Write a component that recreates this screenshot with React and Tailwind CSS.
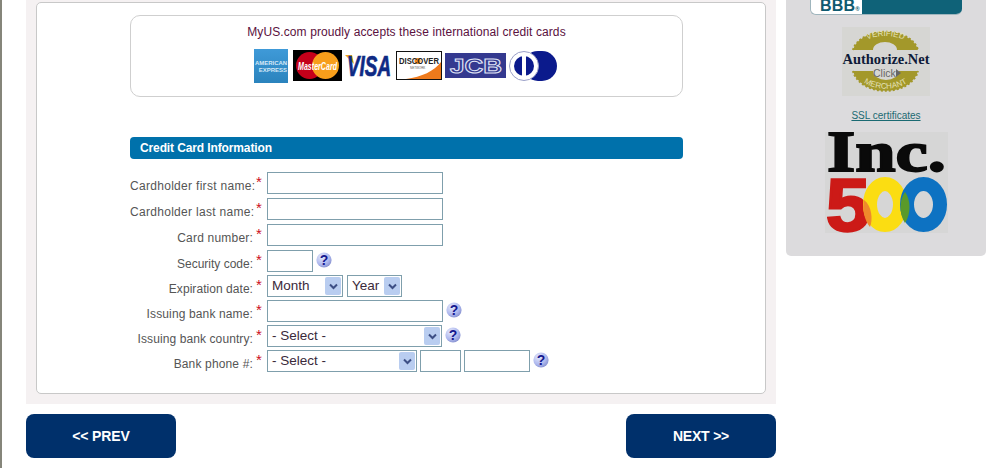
import React from 'react';

// Small blue question mark bubble
const HelpIcon = ({ className = '' }) => (
  <svg width="16" height="16" viewBox="0 0 16 16" className={className}>
    <defs>
      <radialGradient id="helpBg" cx="35%" cy="30%" r="75%">
        <stop offset="0%" stopColor="#e4e8fb" />
        <stop offset="65%" stopColor="#aeb8ee" />
        <stop offset="100%" stopColor="#8791cf" />
      </radialGradient>
    </defs>
    <circle cx="8" cy="8" r="7.6" fill="url(#helpBg)" />
    <text x="8" y="13" textAnchor="middle" fontFamily="Liberation Sans" fontWeight="700" fontSize="14" fill="#15188f">?</text>
  </svg>
);

const TextBox = ({ className }) => (
  <input type="text" className={`h-[22px] border border-[#7f9fac] bg-white outline-none ${className}`} />
);

const Select = ({ label, className }) => (
  <div className={`h-[22px] border border-[#7f9fac] bg-white flex items-center justify-between pr-px ${className}`}>
    <span className="pl-[4px] text-[13.5px] leading-none text-[#3a2a3a]">{label}</span>
    <span className="w-[16px] h-[18px] bg-[#b9cdf0] rounded-[2px] flex items-center justify-center">
      <svg width="9" height="7" viewBox="0 0 9 7">
        <path d="M1 1.5 L4.5 5 L8 1.5" fill="none" stroke="#3d4f85" strokeWidth="2" />
      </svg>
    </span>
  </div>
);

const Row = ({ label, height, spacing, children }) => (
  <div className={`flex items-start ${height}`}>
    <div className={`w-[123px] pt-[7px] text-right text-[12px] leading-[15px] text-[#555555] whitespace-nowrap ${spacing}`}>{label}</div>
    <div className="w-[14px] pl-[3px] pt-[3px] text-[15px] leading-[14px] text-[#cc1122]">*</div>
    <div className="flex items-center gap-[3px]">{children}</div>
  </div>
);

const Amex = () => (
  <svg width="34" height="34" viewBox="0 0 34 34" className="mt-[1px]">
    <defs>
      <linearGradient id="amexBg" x1="0" y1="0" x2="0" y2="1">
        <stop offset="0%" stopColor="#3f9ad8" />
        <stop offset="100%" stopColor="#2a83bd" />
      </linearGradient>
    </defs>
    <rect width="34" height="34" fill="url(#amexBg)" />
    <text x="1" y="16" fontFamily="Liberation Sans" fontWeight="700" fontSize="6" textLength="32" lengthAdjust="spacingAndGlyphs" fill="#d5e8f6">AMERICAN</text>
    <text x="33" y="23" textAnchor="end" fontFamily="Liberation Sans" fontWeight="700" fontSize="6" fill="#d5e8f6">EXPRESS</text>
  </svg>
);

const MasterCard = () => (
  <svg width="49" height="31" viewBox="0 0 49 31" className="mt-[2px] ml-[2px]">
    <rect width="49" height="31" fill="#000000" />
    <circle cx="16.5" cy="15.5" r="13.5" fill="#c4001a" />
    <circle cx="32.5" cy="15.5" r="13.5" fill="#f79e1b" />
    <text x="5" y="19.5" fontFamily="Liberation Sans" fontWeight="700" fontStyle="italic" fontSize="10.5" textLength="39" lengthAdjust="spacingAndGlyphs" fill="#ffffff">MasterCard</text>
  </svg>
);

const Visa = () => (
  <svg width="48" height="24" viewBox="0 0 48 24" className="mt-[6px] overflow-visible">
    <path d="M0 1 L7 1 L9 10 Z" fill="#f2a81d" />
    <text x="2" y="22" fontFamily="Liberation Sans" fontWeight="700" fontStyle="italic" fontSize="29" textLength="44" lengthAdjust="spacingAndGlyphs" fill="#0f2a84" stroke="#0f2a84" strokeWidth="0.7">VISA</text>
  </svg>
);

const Discover = () => (
  <svg width="46" height="29" viewBox="0 0 46 29" className="mt-[3px]">
    <rect x="0.5" y="0.5" width="45" height="28" fill="#ffffff" stroke="#111111" />
    <path d="M10 28 C26 26 38 20 45 11 L45 28 Z" fill="#ee7a1c" />
    <circle cx="21.5" cy="10" r="3" fill="#f08a1d" />
    <text x="3" y="13" fontFamily="Liberation Sans" fontWeight="700" fontSize="8.4" textLength="40" lengthAdjust="spacingAndGlyphs" fill="#222222">DISCOVER</text>
    <text x="14" y="18" fontFamily="Liberation Sans" fontSize="3" fill="#555555">NETWORK</text>
  </svg>
);

const Jcb = () => (
  <svg width="61" height="25" viewBox="0 0 61 25" className="mt-[5px]">
    <rect width="61" height="25" fill="#34398f" />
    <text x="5" y="20" fontFamily="Liberation Sans" fontWeight="700" fontSize="21" textLength="52" lengthAdjust="spacingAndGlyphs" fill="#34398f" stroke="#dfe2f5" strokeWidth="1">JCB</text>
  </svg>
);

const Diners = () => (
  <svg width="48" height="30" viewBox="0 0 48 30" className="mt-[3px]">
    <rect x="14" y="0" width="34" height="30" rx="15" fill="#0b1a8c" />
    <circle cx="15" cy="15" r="14.5" fill="#ffffff" stroke="#9ba0c8" />
    <circle cx="15" cy="15" r="10" fill="#0b1a8c" />
    <rect x="13" y="3" width="4" height="24" fill="#ffffff" />
  </svg>
);

const Bbb = () => (
  <div className="w-[152px] h-[15px] flex rounded-b-[6px] overflow-hidden ml-[24px] border-b border-l border-[#9fb5bd]">
    <div className="w-[51px] bg-white text-[#0f5a70] text-[16px] font-bold leading-[11px] pl-[9px] tracking-[0.2px] whitespace-nowrap">
      BBB<span className="text-[6px]">®</span>
    </div>
    <div className="flex-1 bg-[#0f6278]" />
  </div>
);

const Seal = () => (
  <svg width="88" height="69" viewBox="0 0 88 69" className="mt-[12px] ml-[56px]">
    <defs>
      <path id="topArc" d="M15 22 A29 16 0 0 1 72 22" />
      <path id="botArc" d="M15 47 A29 18 0 0 0 72 47" />
    </defs>
    <rect width="88" height="69" fill="#d6d6d3" />
    <path d="M11 23 A33 22 0 0 1 76 23" fill="none" stroke="#a3982a" strokeWidth="2" strokeDasharray="2 2" />
    <path d="M11 44 A33 24 0 0 0 76 44" fill="none" stroke="#a3982a" strokeWidth="2" strokeDasharray="2 2" />
    <path d="M11 23 A33 22 0 0 1 76 23 L55 23 A12 8 0 0 0 31 23 Z" fill="#a3982a" />
    <path d="M11 44 A33 24 0 0 0 76 44 L57 44 A13 9 0 0 1 31 44 Z" fill="#a3982a" />
    <text fontFamily="Liberation Sans" fontSize="8" fill="#e4e1b8">
      <textPath href="#topArc" startOffset="50%" textAnchor="middle">VERIFIED</textPath>
    </text>
    <text fontFamily="Liberation Sans" fontSize="8" fill="#e4e1b8">
      <textPath href="#botArc" startOffset="50%" textAnchor="middle">MERCHANT</textPath>
    </text>
    <text x="0.5" y="37" fontFamily="Liberation Serif" fontWeight="700" fontSize="15.5" textLength="87" lengthAdjust="spacingAndGlyphs" fill="#0e1a38">Authorize.Net</text>
    <text x="31" y="50" fontFamily="Liberation Sans" fontSize="10.5" fill="#666666">Click</text>
    <path d="M54 42 L59 46 L54 50 Z" fill="#666666" />
  </svg>
);

const Inc500 = () => (
  <svg width="123" height="101" viewBox="0 0 123 101" className="mt-[10px] ml-[39px]">
    <rect width="123" height="101" fill="#d6d6d6" />
    <text x="2" y="39" fontFamily="Liberation Serif" fontWeight="700" fontSize="58" textLength="119" lengthAdjust="spacingAndGlyphs" fill="#0a0a0a" stroke="#0a0a0a" strokeWidth="1.8">Inc.</text>
    <text x="1" y="99" fontFamily="Liberation Sans" fontWeight="700" fontSize="74" textLength="44" lengthAdjust="spacingAndGlyphs" fill="#cc1a17" stroke="#cc1a17" strokeWidth="2.5">5</text>
    <ellipse cx="60" cy="72.5" rx="15" ry="20.5" fill="none" stroke="#fbdd12" strokeWidth="14" />
    <ellipse cx="98.5" cy="72.5" rx="16.5" ry="20.5" fill="none" stroke="#0d72c2" strokeWidth="14" />
    <path d="M39 68 C37 76 39 88 45 95 C48 88 47 74 39 68 Z" fill="#ef8a2c" />
    <path d="M80 60 C74 68 74 82 80 91 C86 82 86 68 80 60 Z" fill="#5a9a2a" />
  </svg>
);

export default function App() {
  return (
    <div className="w-[990px] h-[468px] overflow-hidden bg-white flex font-['Liberation_Sans',Arial,sans-serif]">
      {/* page edge */}
      <div className="w-[2px] bg-[#85857a]" />

      {/* main column */}
      <div className="w-[750px] ml-[24px]">
        <div className="h-[404px] bg-[#f5f1f2] px-[10px] pt-[2px]">
          <div className="h-[392px] bg-white border border-[#c8c8c8] rounded-[5px] pl-[93px] pt-[12px]">
            <div className="w-[553px] h-[82px] border border-[#cfcfcf] rounded-[10px] pt-[9px]">
              <p className="text-center text-[12px] leading-[14px] tracking-[0.1px] text-[#5a1140]">
                MyUS.com proudly accepts these international credit cards
              </p>
              <div className="flex justify-center gap-[3px] mt-[9px] pr-[2px]">
                <Amex />
                <MasterCard />
                <Visa />
                <Discover />
                <Jcb />
                <Diners />
              </div>
            </div>

            <div className="w-[553px] h-[22px] mt-[40px] bg-[#0071ab] rounded-[4px] pl-[10px] text-white text-[12px] font-bold leading-[23px] tracking-[-0.12px]">
              Credit Card Information
            </div>

            <div className="mt-[13px]">
              <Row label="Cardholder first name:" height="h-[26px]" spacing="tracking-[0.3px]"><TextBox className="w-[176px]" /></Row>
              <Row label="Cardholder last name:" height="h-[26px]" spacing="tracking-[0.3px]"><TextBox className="w-[176px]" /></Row>
              <Row label="Card number:" height="h-[26px]" spacing="tracking-[0.2px]"><TextBox className="w-[176px]" /></Row>
              <Row label="Security code:" height="h-[25px]" spacing="tracking-[0px]">
                <TextBox className="w-[46px]" />
                <HelpIcon className="-mt-[3px]" />
              </Row>
              <Row label="Expiration date:" height="h-[25px]" spacing="tracking-[0.05px]">
                <Select label="Month" className="w-[76px]" />
                <Select label="Year" className="w-[55px] ml-px" />
              </Row>
              <Row label="Issuing bank name:" height="h-[25px]" spacing="tracking-[0.13px]">
                <TextBox className="w-[176px]" />
                <HelpIcon className="-mt-[3px]" />
              </Row>
              <Row label="Issuing bank country:" height="h-[25px]" spacing="tracking-[0.1px]">
                <Select label="- Select -" className="w-[175px]" />
                <HelpIcon className="-mt-[3px]" />
              </Row>
              <Row label="Bank phone #:" height="h-[25px]" spacing="tracking-[0.15px]">
                <Select label="- Select -" className="w-[150px]" />
                <TextBox className="w-[41px]" />
                <TextBox className="w-[66px]" />
                <HelpIcon className="-mt-[3px]" />
              </Row>
            </div>
          </div>
        </div>

        <div className="flex justify-between mt-[10px]">
          <button className="w-[150px] h-[44px] rounded-[8px] bg-[#00306b] text-white text-[14px] font-bold tracking-[-0.1px]">&lt;&lt; PREV</button>
          <button className="w-[150px] h-[44px] rounded-[8px] bg-[#00306b] text-white text-[14px] font-bold tracking-[-0.2px]">NEXT &gt;&gt;</button>
        </div>
      </div>

      {/* sidebar */}
      <div className="w-[200px] h-[256px] ml-[10px] bg-[#dcdbdd] rounded-b-[5px]">
        <Bbb />
        <Seal />
        <p className="mt-[14px] text-center text-[10px] leading-[12px] underline text-[#1a6a72]">SSL certificates</p>
        <Inc500 />
      </div>
    </div>
  );
}
